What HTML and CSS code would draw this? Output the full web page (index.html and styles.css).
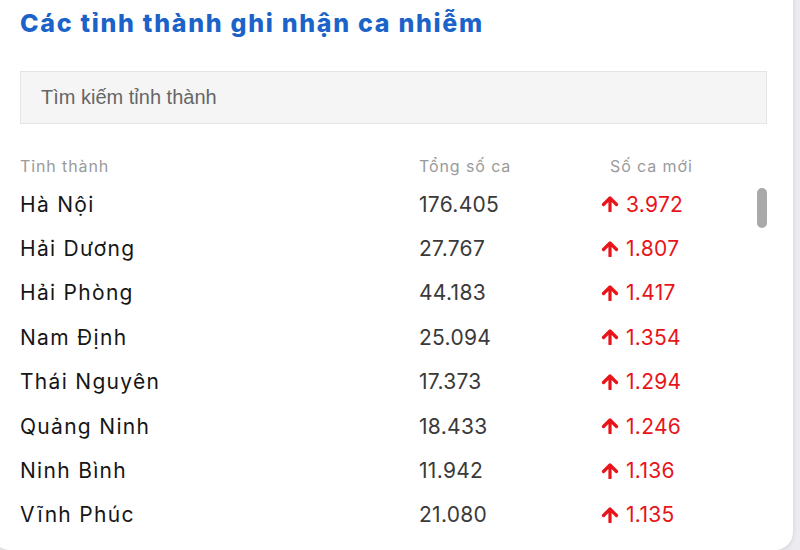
FILE: index.html
```html
<!DOCTYPE html>
<html lang="vi">
<head>
<meta charset="utf-8">
<title>Các tỉnh thành ghi nhận ca nhiễm</title>
<link rel="stylesheet" href="styles.css">
</head>
<body>
<section class="card">
  <h2 class="title">Các tỉnh thành ghi nhận ca nhiễm</h2>
  <div class="search">Tìm kiếm tỉnh thành</div>
  <div class="table">
    <div class="row head">
      <span class="c1">Tỉnh thành</span>
      <span class="c2">Tổng số ca</span>
      <span class="c3">Số ca mới</span>
    </div>
    <div class="list">
      <div class="row"><span class="c1">Hà Nội</span><span class="c2">176.405</span><span class="c3 up"><svg class="arrow" viewBox="0 0 18 16"><path d="M9 15V2.5M2.5 8.5L9 2l6.5 6.5"/></svg>3.972</span></div>
      <div class="row"><span class="c1">Hải Dương</span><span class="c2">27.767</span><span class="c3 up"><svg class="arrow" viewBox="0 0 18 16"><path d="M9 15V2.5M2.5 8.5L9 2l6.5 6.5"/></svg>1.807</span></div>
      <div class="row"><span class="c1">Hải Phòng</span><span class="c2">44.183</span><span class="c3 up"><svg class="arrow" viewBox="0 0 18 16"><path d="M9 15V2.5M2.5 8.5L9 2l6.5 6.5"/></svg>1.417</span></div>
      <div class="row"><span class="c1">Nam Định</span><span class="c2">25.094</span><span class="c3 up"><svg class="arrow" viewBox="0 0 18 16"><path d="M9 15V2.5M2.5 8.5L9 2l6.5 6.5"/></svg>1.354</span></div>
      <div class="row"><span class="c1">Thái Nguyên</span><span class="c2">17.373</span><span class="c3 up"><svg class="arrow" viewBox="0 0 18 16"><path d="M9 15V2.5M2.5 8.5L9 2l6.5 6.5"/></svg>1.294</span></div>
      <div class="row"><span class="c1">Quảng Ninh</span><span class="c2">18.433</span><span class="c3 up"><svg class="arrow" viewBox="0 0 18 16"><path d="M9 15V2.5M2.5 8.5L9 2l6.5 6.5"/></svg>1.246</span></div>
      <div class="row"><span class="c1">Ninh Bình</span><span class="c2">11.942</span><span class="c3 up"><svg class="arrow" viewBox="0 0 18 16"><path d="M9 15V2.5M2.5 8.5L9 2l6.5 6.5"/></svg>1.136</span></div>
      <div class="row"><span class="c1">Vĩnh Phúc</span><span class="c2">21.080</span><span class="c3 up"><svg class="arrow" viewBox="0 0 18 16"><path d="M9 15V2.5M2.5 8.5L9 2l6.5 6.5"/></svg>1.135</span></div>
      <div class="thumb"></div>
    </div>
  </div>
</section>
</body>
</html>
```
FILE: styles.css
```css
html, body {
  margin: 0;
  padding: 0;
}
body {
  background: #ececf0;
  width: 800px;
  height: 550px;
  overflow: hidden;
  font-family: Inter, "Noto Sans", sans-serif;
}
.card {
  box-sizing: border-box;
  width: 801px;
  height: 570px;
  margin: -20px 0 0 -8px;
  padding: 28px 26px 0 28px;
  background: #fff;
  border-radius: 18px;
  box-shadow: 0 1px 5px rgba(0, 0, 0, 0.12);
}
.title {
  margin: 0;
  font-size: 25px;
  line-height: 30px;
  font-weight: 800;
  color: #1b63c9;
  letter-spacing: 1.7px;
}
.search {
  box-sizing: border-box;
  height: 53px;
  margin-top: 33px;
  padding: 0 0 0 20px;
  display: flex;
  align-items: center;
  background: #f5f5f5;
  border: 1px solid #e4e4e4;
  font-family: "Liberation Sans", Arial, sans-serif;
  font-size: 20px;
  color: #666;
}
.table {
  margin-top: 30px;
}
.row {
  display: grid;
  grid-template-columns: 399px 182px 1fr;
  align-items: center;
  height: 44.4px;
  font-size: 21px;
  color: #161616;
  letter-spacing: 0.3px;
}
.row .c1 {
  letter-spacing: 1.3px;
}
.row .c2 {
  color: #3a3a3a;
}
.row.head {
  height: 24px;
  margin-bottom: 4px;
  font-size: 16px;
  letter-spacing: 1px;
}
.row.head span {
  color: #9a9a9a;
  letter-spacing: 0.9px;
}
.row.head .c3 {
  padding-left: 9px;
}
.list {
  position: relative;
}
.up {
  display: flex;
  align-items: center;
  gap: 7px;
  color: #e8141a;
}
.arrow {
  width: 18px;
  height: 16px;
  fill: none;
  stroke: #e8141a;
  stroke-width: 3.2;
  stroke-linecap: round;
  stroke-linejoin: round;
}
.thumb {
  position: absolute;
  top: 6px;
  right: 0;
  width: 10px;
  height: 40px;
  border-radius: 5px;
  background: #a9a9a9;
}
```
